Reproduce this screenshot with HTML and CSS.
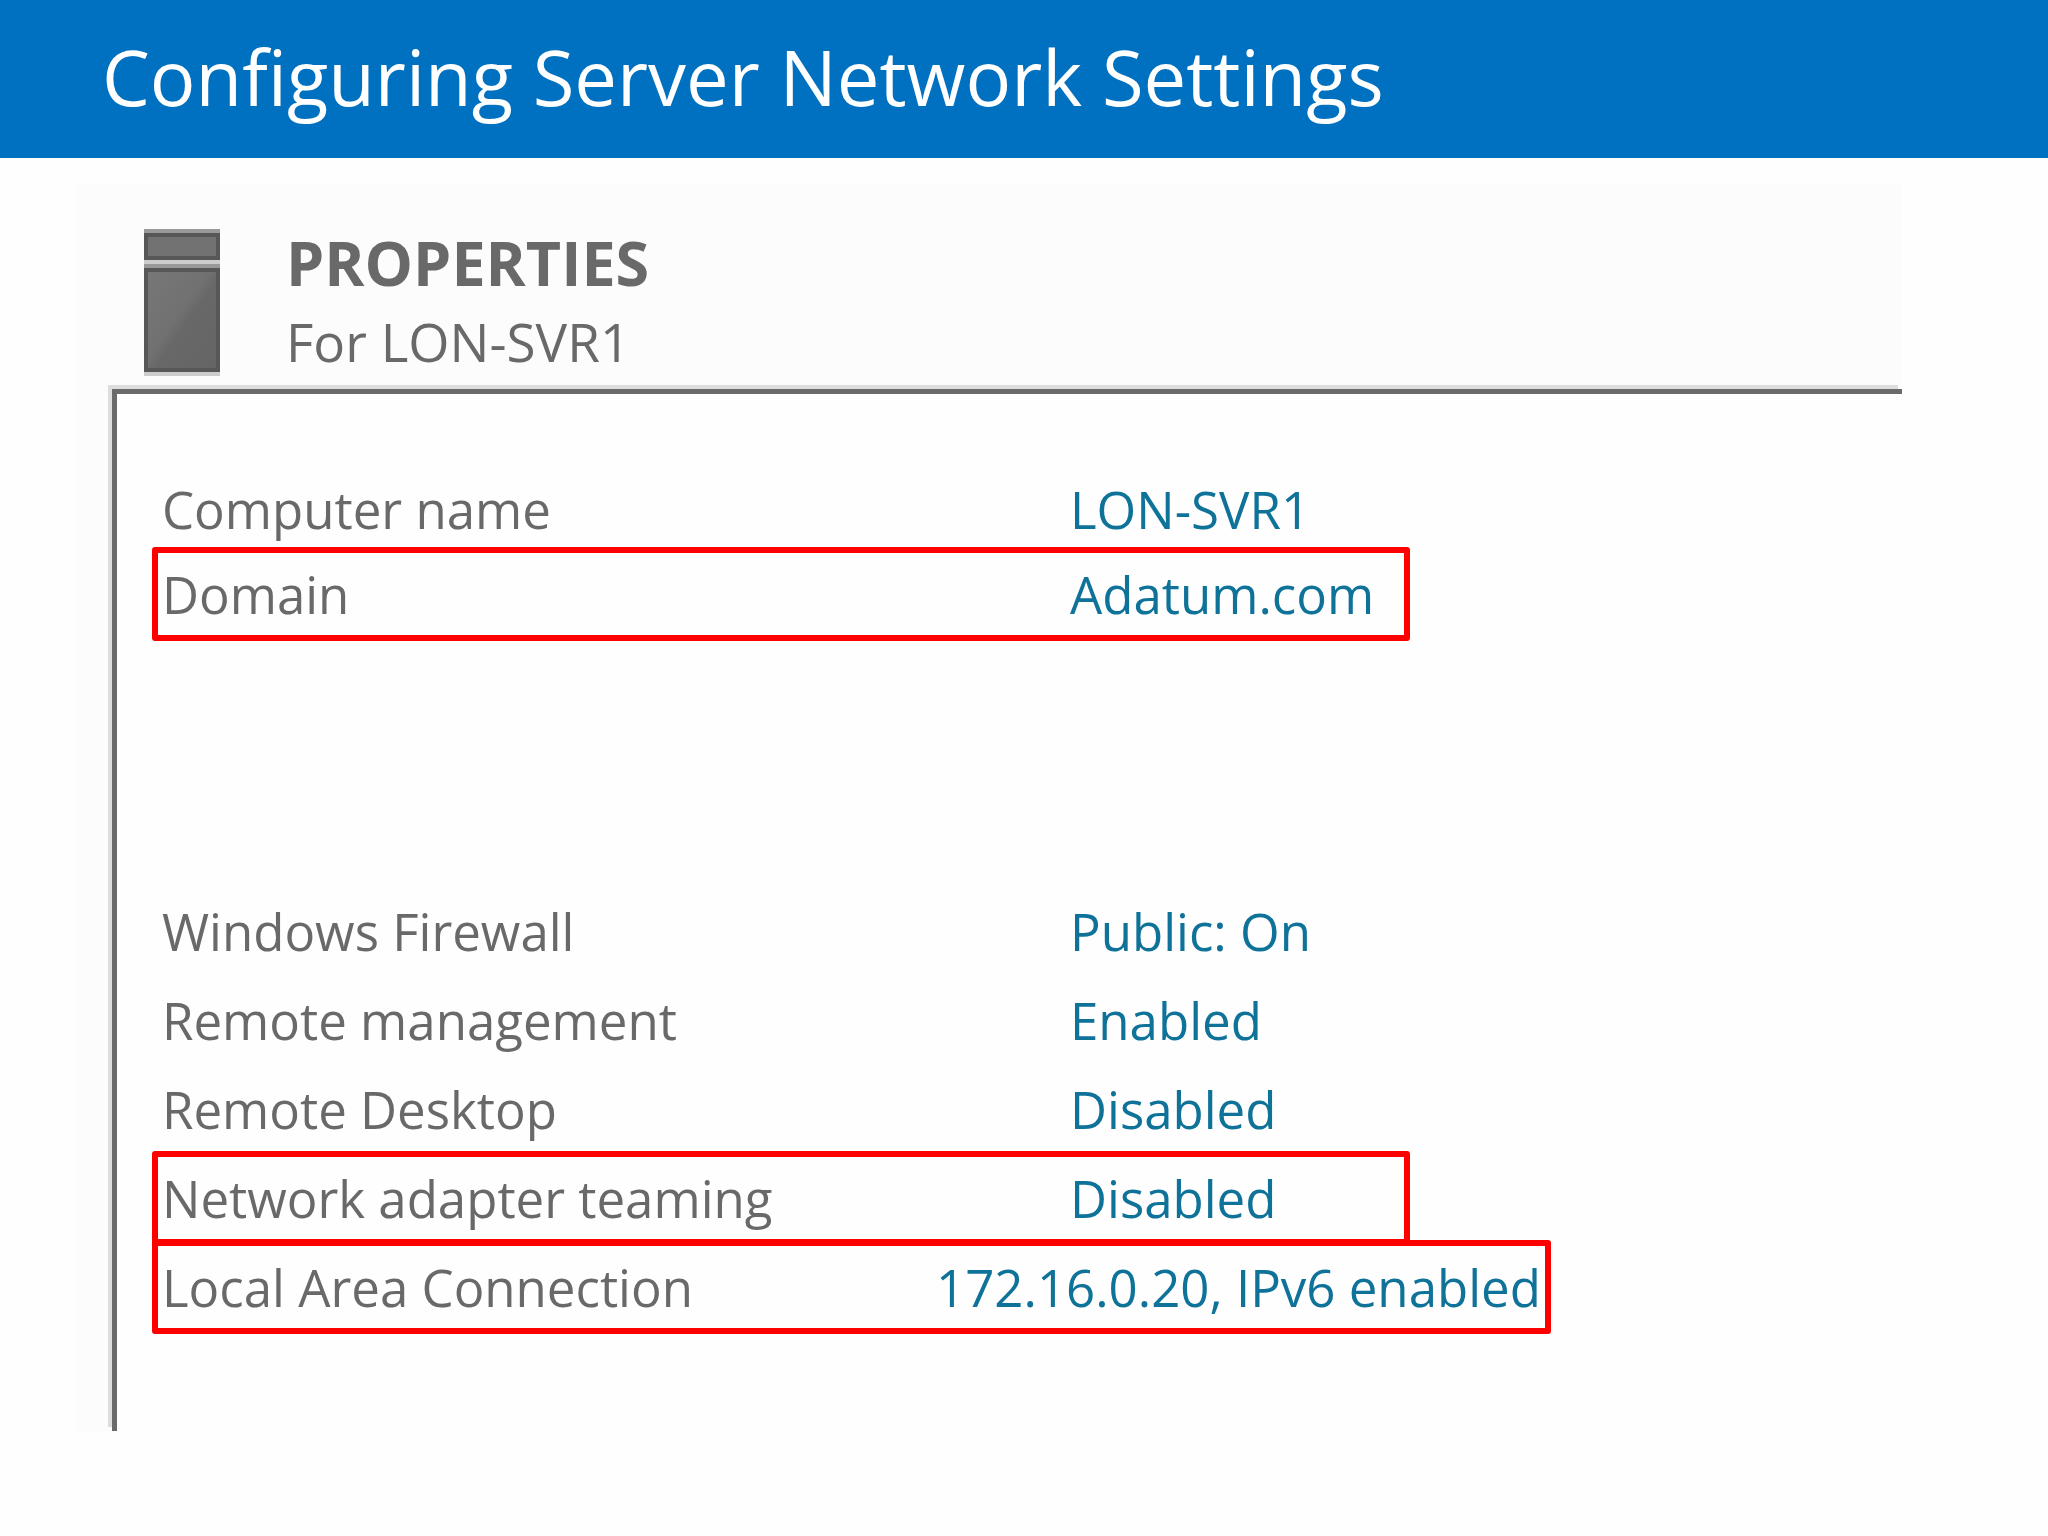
FILE: index.html
```html
<!DOCTYPE html>
<html lang="en">
<head>
    <meta charset="UTF-8">
    <meta name="viewport" content="width=device-width, initial-scale=1.0">
    <title>Configuring Server Network Settings</title>
    <link rel="stylesheet" href="styles.css">
</head>
<body>
    <header class="title-bar">
        <h1>Configuring Server Network Settings</h1>
    </header>

    <main class="panel">
        <!-- Server tile header -->
        <div class="panel-header">
            <svg class="server-icon" viewBox="0 0 76 147" aria-hidden="true">
                <defs>
                    <linearGradient id="metal" x1="0" y1="0" x2="1" y2="1">
                        <stop offset="0" stop-color="#777"/>
                        <stop offset="0.45" stop-color="#717171"/>
                        <stop offset="0.55" stop-color="#686868"/>
                        <stop offset="1" stop-color="#656565"/>
                    </linearGradient>
                </defs>
                <rect width="76" height="147" fill="#cccccc"/>
                <rect width="76" height="5" fill="#999999"/>
                <rect y="4" width="76" height="27" fill="#575757"/>
                <rect x="4" y="8" width="68" height="19" fill="#727272"/>
                <rect y="35" width="76" height="5" fill="#999999"/>
                <rect y="39" width="76" height="104" fill="#575757"/>
                <rect x="4" y="43" width="68" height="96" fill="url(#metal)"/>
            </svg>
            <div class="panel-title">
                <h2>PROPERTIES</h2>
                <p>For LON-SVR1</p>
            </div>
        </div>

        <div class="properties">
            <!-- Computer -->
            <dl class="group computer">
                <div class="row">
                    <dt>Computer name</dt>
                    <dd><a href="#">LON-SVR1</a></dd>
                </div>
                <div class="row highlight">
                    <dt>Domain</dt>
                    <dd><a href="#">Adatum.com</a></dd>
                </div>
            </dl>

            <!-- Network -->
            <dl class="group network">
                <div class="row">
                    <dt>Windows Firewall</dt>
                    <dd><a href="#">Public: On</a></dd>
                </div>
                <div class="row">
                    <dt>Remote management</dt>
                    <dd><a href="#">Enabled</a></dd>
                </div>
                <div class="row">
                    <dt>Remote Desktop</dt>
                    <dd><a href="#">Disabled</a></dd>
                </div>
                <div class="row highlight">
                    <dt>Network adapter teaming</dt>
                    <dd><a href="#">Disabled</a></dd>
                </div>
                <div class="row highlight wide">
                    <dt>Local Area Connection</dt>
                    <dd><a href="#">172.16.0.20, IPv6 enabled</a></dd>
                </div>
            </dl>
        </div>
    </main>
</body>
</html>
```
FILE: styles.css
```css
* {
    box-sizing: border-box;
}
body {
    margin: 0;
    font-family: "Open Sans", "Noto Sans", sans-serif;
    background-color: #FEFEFE;
    color: #696969;
}
h1, h2, p, dl, dd {
    margin: 0;
}
.title-bar {
    height: 158px;
    padding: 0 102px 4px;
    display: flex;
    align-items: center;
    background-color: #0070C0;
}
h1 {
    color: #FFFFFF;
    font-size: 76px;
    font-weight: normal;
    line-height: 104px;
    white-space: nowrap;
}
.panel {
    margin: 27px 146px 0 76px;
    padding-left: 36px;
    background-color: #FDFCFD;
}
.panel-header {
    display: flex;
    gap: 66px;
    padding: 44px 0 9px 32px;
}
.server-icon {
    width: 76px;
    height: 147px;
}
.panel-title h2 {
    font-size: 61px;
    line-height: 68px;
}
.panel-title p {
    margin-top: 7px;
    font-size: 53px;
    line-height: 76px;
}
.properties {
    padding: 68px 0 97px 35px;
    border-top: 5px solid #6A6A6A;
    border-left: 5px solid #6A6A6A;
    box-shadow: -4px -4px 0 #DDDDDD;
    background-color: #FEFEFE;
}
.group {
    display: flex;
    flex-direction: column;
    font-size: 51px;
    line-height: 82px;
    white-space: nowrap;
}
.network {
    margin-top: 243px;
}
.row {
    display: flex;
    width: 1258px;
    padding-left: 4px;
    border: 6px solid transparent;
}
.computer .row + .row {
    margin-top: -9px;
}
.network .row + .row {
    margin-top: -5px;
}
dt {
    width: 908px;
}
.highlight {
    border-color: #FF0000;
    border-radius: 3px;
}
.wide {
    width: 1399px;
}
.wide dt {
    width: 774px;
}
a {
    color: #0F7299;
    text-decoration: none;
}
a:hover {
    text-decoration: underline;
}
```
